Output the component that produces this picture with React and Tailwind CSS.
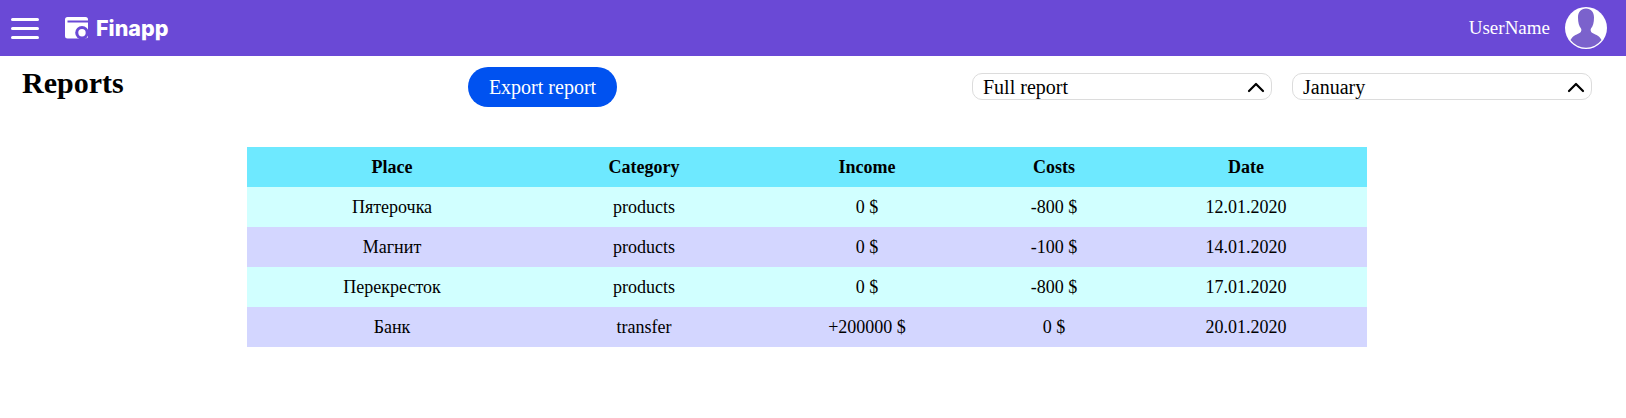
import React from 'react';

const rows = [
  { place: 'Пятерочка', category: 'products', income: '0 $', costs: '-800 $', date: '12.01.2020' },
  { place: 'Магнит', category: 'products', income: '0 $', costs: '-100 $', date: '14.01.2020' },
  { place: 'Перекресток', category: 'products', income: '0 $', costs: '-800 $', date: '17.01.2020' },
  { place: 'Банк', category: 'transfer', income: '+200000 $', costs: '0 $', date: '20.01.2020' },
];

const LogoIcon = () => (
  <svg width="25" height="24" viewBox="0 0 25 24" fill="none">
    <rect x="1" y="1" width="23" height="21.500" rx="2.500" fill="#fff" />
    <rect x="3.500" y="4.500" width="20.500" height="2" fill="#6a49d6" />
    <circle cx="18" cy="16.700" r="6.800" fill="#6a49d6" />
    <rect x="18" y="22.500" width="7" height="2" fill="#6a49d6" />
    <circle cx="18" cy="16.700" r="3.700" fill="#fff" />
  </svg>
);

const Avatar = () => (
  <svg width="42" height="42" viewBox="0 0 42 42" className="shrink-0">
    <circle cx="21" cy="21" r="21" fill="#fff" />
    <path
      fill="#7b62cc"
      d="M21 1.500c5 0 8 3.500 8 9 0 5-1 8.500-3 11-.8 1.500-.3 3.500 1.500 4.500 4 2 7 3 9 7A19.500 19.500 0 0 1 5.500 33c2-4 5-5 9-7 1.800-1 2.300-3 1.500-4.500-2-2.500-3-6-3-11 0-5.500 3-9 8-9z"
    />
  </svg>
);

const Select = ({ label }) => (
  <div className="flex h-[27px] w-[300px] items-center justify-between rounded-[10px] border border-[#dcdcdc] bg-white pl-[10px] pr-[6px] text-[20px]">
    <span>{label}</span>
    <svg width="18" height="12" viewBox="0 0 18 12" fill="none" stroke="#000" strokeWidth="2.200" strokeLinecap="round" strokeLinejoin="round">
      <path d="M2 10l7-7 7 7" />
    </svg>
  </div>
);

const App = () => {
  return (
    <div className="h-[418px] w-full overflow-hidden bg-white font-['Liberation_Serif',serif] text-black">
      {/* Top bar */}
      <header className="flex h-[56px] items-center justify-between bg-[#6a49d6] pl-[11px] pr-[19px]">
        <div className="flex items-center">
          <div className="flex h-[21px] w-[28px] flex-col justify-between">
            <span className="h-[3px] rounded-full bg-white" />
            <span className="h-[3px] rounded-full bg-white" />
            <span className="h-[3px] rounded-full bg-white" />
          </div>
          <div className="ml-[25px] flex items-center">
            <LogoIcon />
            <span className="ml-[7px] font-['Inter',sans-serif] text-[21.500px] font-extrabold text-white">Finapp</span>
          </div>
        </div>
        <div className="flex items-center">
          <span className="text-[19px] text-white">UserName</span>
          <div className="ml-[15px]">
            <Avatar />
          </div>
        </div>
      </header>

      {/* Toolbar */}
      <div className="flex items-start pl-[22px] pr-[34px]">
        <h1 className="mt-[10px] w-[446px] text-[30px] leading-[34px] font-bold">Reports</h1>
        <button className="mt-[11px] h-[40px] w-[149px] rounded-full bg-[#0052f0] text-[20px] text-white">Export report</button>
        <div className="ml-auto mt-[17px] flex gap-[20px]">
          <Select label="Full report" />
          <Select label="January" />
        </div>
      </div>

      {/* Report table */}
      <div className="mt-[40px] flex justify-center pr-[12px]">
        <table className="w-[1120px] table-fixed border-collapse text-center text-[18px]">
          <colgroup>
            <col className="w-[290px]" />
            <col className="w-[214px]" />
            <col className="w-[232px]" />
            <col className="w-[142px]" />
            <col className="w-[242px]" />
          </colgroup>
          <thead>
            <tr className="h-[40px] bg-[#6ee9ff]">
              <th>Place</th>
              <th>Category</th>
              <th>Income</th>
              <th>Costs</th>
              <th>Date</th>
            </tr>
          </thead>
          <tbody>
            {rows.map((row, i) => (
              <tr key={row.date} className={i % 2 === 0 ? 'h-[40px] bg-[#d1ffff]' : 'h-[40px] bg-[#d3d6ff]'}>
                <td>{row.place}</td>
                <td>{row.category}</td>
                <td>{row.income}</td>
                <td>{row.costs}</td>
                <td>{row.date}</td>
              </tr>
            ))}
          </tbody>
        </table>
      </div>
    </div>
  );
};

export default App;
